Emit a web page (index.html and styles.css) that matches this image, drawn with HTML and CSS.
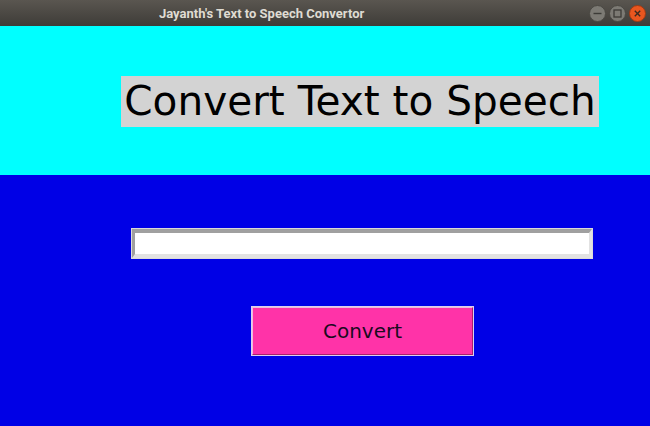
FILE: index.html
```html
<!DOCTYPE html>
<html>
<head>
<meta charset="utf-8">
<link rel="stylesheet" href="styles.css">
</head>
<body>
<div class="window">
  <div class="titlebar">
    <div class="title">Jayanth's Text to Speech Convertor</div>
    <div class="controls">
      <svg class="ctl" width="17" height="17" viewBox="0 0 17 17">
        <circle cx="8.5" cy="8.5" r="8" fill="#7c7a74" stroke="#4a4843" stroke-width="1"/>
        <line x1="4.5" y1="8.5" x2="12.5" y2="8.5" stroke="#3c3b37" stroke-width="1.4"/>
      </svg>
      <svg class="ctl" width="17" height="17" viewBox="0 0 17 17">
        <circle cx="8.5" cy="8.5" r="8" fill="#7c7a74" stroke="#4a4843" stroke-width="1"/>
        <rect x="5" y="5" width="7" height="7" fill="none" stroke="#3c3b37" stroke-width="1.3"/>
      </svg>
      <svg class="ctl" width="17" height="17" viewBox="0 0 17 17">
        <circle cx="8.5" cy="8.5" r="8" fill="#e9561f" stroke="#9e3a14" stroke-width="1"/>
        <line x1="5.8" y1="5.8" x2="11.2" y2="11.2" stroke="#3c2a20" stroke-width="1.4"/>
        <line x1="11.2" y1="5.8" x2="5.8" y2="11.2" stroke="#3c2a20" stroke-width="1.4"/>
      </svg>
    </div>
  </div>
  <div class="header">
    <div class="heading">Convert Text to Speech</div>
  </div>
  <div class="main">
    <div class="entry-wrap"><div class="entry"></div></div>
    <div class="btn-wrap"><div class="btn">Convert</div></div>
  </div>
</div>
</body>
</html>
```
FILE: styles.css
```css
html, body {
  margin: 0;
  padding: 0;
  width: 650px;
  height: 426px;
  overflow: hidden;
  font-family: "DejaVu Sans", sans-serif;
}
.window {
  display: flex;
  flex-direction: column;
  width: 650px;
  height: 426px;
}
.titlebar {
  height: 26px;
  flex: none;
  display: flex;
  align-items: center;
  background: linear-gradient(#5a5650, #3e3c38);
}
.title {
  padding-left: 159px;
  font-family: "Roboto", "DejaVu Sans", sans-serif;
  font-weight: 700;
  font-size: 13px;
  color: #dfdbd2;
  flex: 1;
}
.controls {
  display: flex;
  gap: 3px;
  padding-right: 4px;
  padding-top: 1px;
}
.ctl { display: block; }
.header {
  height: 149px;
  flex: none;
  background: #00ffff;
  padding-top: 50px;
  padding-left: 121px;
  box-sizing: border-box;
}
.heading {
  width: 478px;
  height: 51px;
  background: #d3d3d3;
  color: #000;
  font-size: 40.6px;
  line-height: 51px;
  text-align: center;
  white-space: nowrap;
}
.main {
  flex: 1;
  background: #0000e6;
  padding-top: 53px;
  box-sizing: border-box;
}
.entry-wrap {
  margin-left: 131px;
  width: 462px;
  height: 31px;
  box-sizing: border-box;
  border: 1px solid #dadada;
}
.entry {
  height: 100%;
  box-sizing: border-box;
  background: #fff;
  border-style: solid;
  border-width: 4px 3px 4px 3px;
  border-color: #a0a0a0 #e2e2e2 #e2e2e2 #a0a0a0;
}
.btn-wrap {
  margin-top: 47px;
  margin-left: 251px;
  width: 223px;
  height: 50px;
  box-sizing: border-box;
  border: 1px solid #dcd0ec;
}
.btn {
  height: 100%;
  box-sizing: border-box;
  background: #ff33a8;
  border-style: solid;
  border-width: 1px;
  border-color: #f2b8dc #a8206c #a8206c #f2b8dc;
  display: flex;
  align-items: center;
  justify-content: center;
  font-size: 20px;
  color: #1a0a1e;
}
```
